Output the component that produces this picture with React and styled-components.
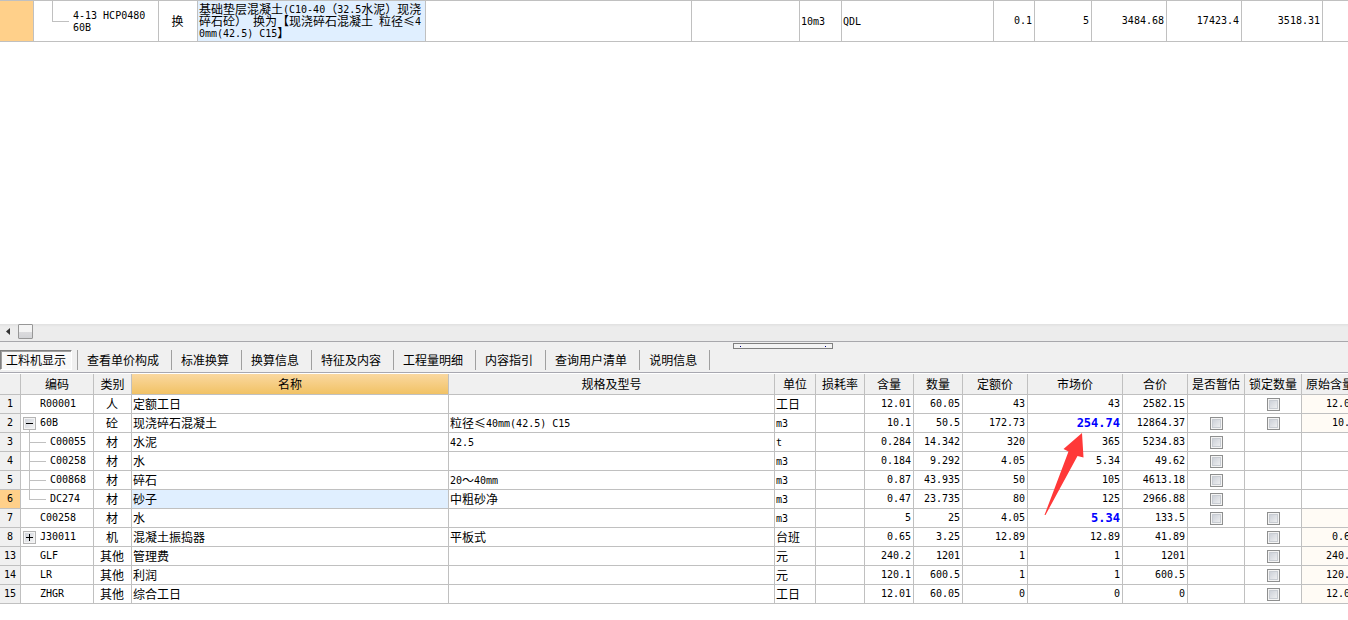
import React, { useState } from "react";
import styled, { createGlobalStyle } from "styled-components";

const tabs = [
  "工料机显示",
  "查看单价构成",
  "标准换算",
  "换算信息",
  "特征及内容",
  "工程量明细",
  "内容指引",
  "查询用户清单",
  "说明信息",
];

const columns = [
  { title: "", width: 21 },
  { title: "编码", width: 73 },
  { title: "类别", width: 38 },
  { title: "名称", width: 317, active: true },
  { title: "规格及型号" },
  { title: "单位", width: 41 },
  { title: "损耗率", width: 49 },
  { title: "含量", width: 49 },
  { title: "数量", width: 49 },
  { title: "定额价", width: 65 },
  { title: "市场价", width: 95 },
  { title: "合价", width: 65 },
  { title: "是否暂估", width: 57 },
  { title: "锁定数量", width: 57 },
  { title: "原始含量", width: 57 },
];

const quotaColumns = [34, 125, 39, 228, 266, 108, 42, 152, 41, 57, 75, 75, 81, null];

const resources = [
  { no: 1, code: "R00001", type: "人", name: "定额工日", spec: "", unit: "工日", content: "12.01", qty: "60.05", base: "43", market: "43", total: "2582.15", lock: true, origin: "12.01" },
  { no: 2, code: "60B", tree: "open", type: "砼", name: "现浇碎石混凝土", spec: "粒径≤40mm(42.5) C15", unit: "m3", content: "10.1", qty: "50.5", base: "172.73", market: "254.74", changed: true, arrow: true, total: "12864.37", estimate: true, lock: true, origin: "10.1" },
  { no: 3, code: "C00055", tree: "child", type: "材", name: "水泥", spec: "42.5", unit: "t", content: "0.284", qty: "14.342", base: "320", market: "365", total: "5234.83", estimate: true },
  { no: 4, code: "C00258", tree: "child", type: "材", name: "水", spec: "", unit: "m3", content: "0.184", qty: "9.292", base: "4.05", market: "5.34", total: "49.62", estimate: true },
  { no: 5, code: "C00868", tree: "child", type: "材", name: "碎石", spec: "20～40mm", unit: "m3", content: "0.87", qty: "43.935", base: "50", market: "105", total: "4613.18", estimate: true },
  { no: 6, code: "DC274", tree: "last", type: "材", name: "砂子", spec: "中粗砂净", unit: "m3", content: "0.47", qty: "23.735", base: "80", market: "125", total: "2966.88", estimate: true },
  { no: 7, code: "C00258", type: "材", name: "水", spec: "", unit: "m3", content: "5", qty: "25", base: "4.05", market: "5.34", changed: true, total: "133.5", estimate: true, lock: true, origin: "" },
  { no: 8, code: "J30011", tree: "closed", type: "机", name: "混凝土振捣器", spec: "平板式", unit: "台班", content: "0.65", qty: "3.25", base: "12.89", market: "12.89", total: "41.89", lock: true, origin: "0.65" },
  { no: 13, code: "GLF", type: "其他", name: "管理费", spec: "", unit: "元", content: "240.2", qty: "1201", base: "1", market: "1", total: "1201", lock: true, origin: "240.2" },
  { no: 14, code: "LR", type: "其他", name: "利润", spec: "", unit: "元", content: "120.1", qty: "600.5", base: "1", market: "1", total: "600.5", lock: true, origin: "120.1" },
  { no: 15, code: "ZHGR", type: "其他", name: "综合工日", spec: "", unit: "工日", content: "12.01", qty: "60.05", base: "0", market: "0", total: "0", lock: true, origin: "12.01" },
];

// Half-width runs use the monospaced face, the rest stays in the CJK face.
function Mixed({ text }) {
  return text
    .split(/([\x20-\x7e]+)/)
    .filter(Boolean)
    .map((part, i) =>
      /^[\x20-\x7e]/.test(part) ? <Mono key={i}>{part}</Mono> : part
    );
}

function TreeGutter({ kind, onToggle }) {
  if (kind === "child" || kind === "last") {
    return (
      <Branch>
        <BranchTop />
        {kind === "child" && <BranchRest />}
      </Branch>
    );
  }
  if (kind === "open" || kind === "closed") {
    return (
      <ExpanderBox>
        <Expander
          type="button"
          aria-label={kind === "open" ? "折叠" : "展开"}
          onClick={onToggle}
        >
          <svg width="9" height="9" viewBox="0 0 9 9" shapeRendering="crispEdges">
            <path d="M1 4h7v1H1z" fill="#000" />
            {kind === "closed" && <path d="M4 1h1v7H4z" fill="#000" />}
          </svg>
        </Expander>
        {kind === "open" && <Stub />}
      </ExpanderBox>
    );
  }
  return null;
}

function QuotaGrid() {
  return (
    <Grid $min={1359}>
      <colgroup>
        {quotaColumns.map((width, i) => (
          <Col key={i} $width={width} />
        ))}
      </colgroup>
      <tbody>
        <QuotaRow>
          <RowNo $selected />
          <Cell $flush>
            <QuotaCode>
              <QuotaBranch />
              <QuotaCodeText>
                4-13 HCP0480
                <br />
                60B
              </QuotaCodeText>
            </QuotaCode>
          </Cell>
          <Cell $align="center">换</Cell>
          <QuotaName>
            <Mixed text="基础垫层混凝土(C10-40（32.5水泥）现浇碎石砼） 换为【现浇碎石混凝土 粒径≤40mm(42.5) C15】" />
          </QuotaName>
          <Cell />
          <Cell />
          <Cell><Mono>10m3</Mono></Cell>
          <Cell><Mono>QDL</Mono></Cell>
          <NumCell>0.1</NumCell>
          <NumCell>5</NumCell>
          <NumCell>3484.68</NumCell>
          <NumCell>17423.4</NumCell>
          <NumCell>3518.31</NumCell>
          <Cell />
        </QuotaRow>
      </tbody>
    </Grid>
  );
}

function ResourceRow({ row, selected, onSelect, onToggle }) {
  return (
    <tr onClick={onSelect}>
      <RowNo $selected={selected}>{row.no}</RowNo>
      <Cell $flush>
        <CodeBox>
          <Gutter>
            <TreeGutter kind={row.tree} onToggle={onToggle} />
          </Gutter>
          <CodeText $child={row.tree === "child" || row.tree === "last"}>
            {row.code}
          </CodeText>
        </CodeBox>
      </Cell>
      <Cell $align="center">{row.type}</Cell>
      <Cell $selected={selected}>{row.name}</Cell>
      <Cell><Mixed text={row.spec} /></Cell>
      <Cell><Mixed text={row.unit} /></Cell>
      <Cell />
      <NumCell>{row.content}</NumCell>
      <NumCell>{row.qty}</NumCell>
      <NumCell>{row.base}</NumCell>
      <MarketCell $changed={row.changed}>
        {row.market}
        {row.arrow && (
          <Arrow width="40" height="84" viewBox="0 0 40 84" aria-hidden="true">
            <path d="M38 0L19.5 16L24.5 18.5L0.5 82L1.5 82L33.5 23L39.5 24.5Z" fill="#ff3838" />
          </Arrow>
        )}
      </MarketCell>
      <NumCell>{row.total}</NumCell>
      <Cell $flush $align="center">
        {row.estimate && <Check type="checkbox" aria-label={`${row.name} 是否暂估`} />}
      </Cell>
      <Cell $flush $align="center">
        {row.lock && <Check type="checkbox" aria-label={`${row.name} 锁定数量`} />}
      </Cell>
      <NumCell $tint={row.lock}>{row.origin}</NumCell>
    </tr>
  );
}

export default function App() {
  const [activeTab, setActiveTab] = useState(tabs[0]);
  const [selectedNo, setSelectedNo] = useState(6);
  const [expanded, setExpanded] = useState(true);

  const rows = resources
    .filter((r) => expanded || (r.tree !== "child" && r.tree !== "last"))
    .map((r) => (r.no === 2 && !expanded ? { ...r, tree: "closed" } : r));

  const handleToggle = (no) => {
    if (no === 2) setExpanded(!expanded);
  };

  return (
    <Page>
      <GlobalStyle />
      <QuotaPane>
        <QuotaGrid />
      </QuotaPane>
      <ScrollBar>
        <ScrollButton type="button" aria-label="向左滚动">
          <svg width="4" height="7" viewBox="0 0 4 7">
            <path d="M4 0v7L0 3.5z" fill="#333" />
          </svg>
        </ScrollButton>
        <ScrollThumb />
      </ScrollBar>
      <Splitter>
        <SplitterHandle>
          <HandleDot />
          <HandleDot />
        </SplitterHandle>
      </Splitter>
      <TabBar>
        {tabs.map((tab) => (
          <TabItem key={tab}>
            <Tab
              type="button"
              $active={tab === activeTab}
              onClick={() => setActiveTab(tab)}
            >
              {tab}
            </Tab>
          </TabItem>
        ))}
      </TabBar>
      <ResourcePane>
        <Grid $min={1359}>
          <colgroup>
            {columns.map((col, i) => (
              <Col key={i} $width={col.width} />
            ))}
          </colgroup>
          <thead>
            <tr>
              {columns.map((col, i) => (
                <HeadCell key={i} $active={col.active}>{col.title}</HeadCell>
              ))}
            </tr>
          </thead>
          <tbody>
            {rows.map((row) => (
              <ResourceRow
                key={row.no}
                row={row}
                selected={row.no === selectedNo}
                onSelect={() => setSelectedNo(row.no)}
                onToggle={() => handleToggle(row.no)}
              />
            ))}
          </tbody>
        </Grid>
      </ResourcePane>
    </Page>
  );
}

const GlobalStyle = createGlobalStyle`
  * {
    box-sizing: border-box;
  }
  body {
    margin: 0;
    background: #fff;
    color: #000;
    font-family: "Noto Sans CJK SC", sans-serif;
    font-size: 12px;
    text-spacing-trim: space-all;
  }
  button {
    font: inherit;
    color: inherit;
  }
`;

const Page = styled.div`
  display: flex;
  flex-direction: column;
  min-height: 100vh;
  overflow: hidden;
`;

const QuotaPane = styled.section`
  flex: 1;
  border-top: 1px solid #c0c0c0;
  overflow: hidden;
`;

const ResourcePane = styled.section`
  overflow: hidden;
  padding-bottom: 16px;
  border-top: 1px solid #fff;
`;

const Grid = styled.table`
  table-layout: fixed;
  border-collapse: separate;
  border-spacing: 0;
  width: 100%;
  min-width: ${(p) => p.$min}px;
`;

const Col = styled.col`
  width: ${(p) => (p.$width ? `${p.$width}px` : "auto")};
`;

const Cell = styled.td`
  padding: ${(p) => (p.$flush ? "0" : "0 2px 0 1px")};
  height: 19px;
  line-height: 18px;
  border-right: 1px solid #c0c0c0;
  border-bottom: 1px solid #c0c0c0;
  background: ${(p) => (p.$selected ? "#e0efff" : "#fff")};
  text-align: ${(p) => p.$align || "left"};
  vertical-align: middle;
  white-space: nowrap;
`;

const NumCell = styled(Cell)`
  background: ${(p) => (p.$tint ? "#fffbf5" : "#fff")};
  font-family: "DejaVu Sans Mono", monospace;
  font-size: 10px;
  text-align: right;
`;

const MarketCell = styled(NumCell)`
  position: relative;
  color: ${(p) => (p.$changed ? "#0000ff" : "#000")};
  font-size: ${(p) => (p.$changed ? "12px" : "10px")};
  font-weight: ${(p) => (p.$changed ? "bold" : "normal")};
`;

const Arrow = styled.svg`
  position: absolute;
  z-index: 1;
  top: 19px;
  right: 38px;
  pointer-events: none;
`;

const RowNo = styled(Cell)`
  padding: 0;
  background: ${(p) => (p.$selected ? "#ffd08a" : "#f0f0f0")};
  font-family: "DejaVu Sans Mono", monospace;
  font-size: 10px;
  text-align: center;
`;

const HeadCell = styled.th`
  height: 21px;
  padding: 0;
  border-right: 1px solid #c0c0c0;
  border-bottom: 1px solid #c0c0c0;
  background: ${(p) =>
    p.$active ? "linear-gradient(#fad8a0, #f1c265)" : "#f0f0f0"};
  font-weight: normal;
  line-height: 20px;
  white-space: nowrap;
`;

const Mono = styled.span`
  font-family: "DejaVu Sans Mono", monospace;
  font-size: 10px;
  line-height: 8px;
  vertical-align: 1px;
`;

const QuotaRow = styled.tr`
  td {
    height: 41px;
  }
`;

const QuotaCode = styled.div`
  display: flex;
  height: 40px;
`;

const QuotaBranch = styled.span`
  width: 17px;
  height: 21px;
  margin-left: 18px;
  border-left: 1px solid #c0c0c0;
  border-bottom: 1px solid #c0c0c0;
`;

const QuotaCodeText = styled.span`
  align-self: center;
  padding: 2px 0 0 4px;
  font-family: "DejaVu Sans Mono", monospace;
  font-size: 10px;
  line-height: 12px;
`;

const QuotaName = styled(Cell)`
  background: #e0efff;
  line-height: 12px;
  white-space: normal;
  word-break: break-all;
`;

const CodeBox = styled.div`
  display: flex;
  align-items: center;
  height: 18px;
`;

const Gutter = styled.span`
  display: flex;
  width: 19px;
  height: 18px;
`;

const CodeText = styled.span`
  padding-left: ${(p) => (p.$child ? "10px" : "0")};
  font-family: "DejaVu Sans Mono", monospace;
  font-size: 10px;
`;

const Branch = styled.span`
  display: flex;
  flex: none;
  flex-direction: column;
  width: 17px;
  margin-left: 8px;
`;

const BranchTop = styled.span`
  height: 10px;
  border-left: 1px solid #c0c0c0;
  border-bottom: 1px solid #c0c0c0;
`;

const BranchRest = styled.span`
  flex: 1;
  border-left: 1px solid #c0c0c0;
`;

const ExpanderBox = styled.span`
  display: flex;
  flex-direction: column;
  align-items: center;
  padding: 3px 0 0 2px;
`;

const Expander = styled.button`
  display: flex;
  flex: none;
  align-items: center;
  justify-content: center;
  width: 13px;
  height: 13px;
  padding: 0;
  border: 1px solid #b4b4b4;
  background: linear-gradient(135deg, #ccd0d8, #f6f6f6);
  box-shadow: inset 0 0 0 1px #f4f4f4;
`;

const Stub = styled.span`
  flex: 1;
  width: 1px;
  background: #c0c0c0;
`;

const Check = styled.input`
  appearance: none;
  display: block;
  width: 13px;
  height: 13px;
  margin: 0 auto;
  border: 1px solid #8e8f8f;
  background: linear-gradient(135deg, #c4c9d2, #f6f6f6);
  box-shadow: inset 0 0 0 1px #f4f4f4, inset 0 0 0 2px #c8ccd2;
  &:checked {
    background: #4a6f9c;
  }
`;

const ScrollBar = styled.div`
  display: flex;
  align-items: flex-start;
  height: 17px;
  background: linear-gradient(#e0e0e0, #ececec 3px, #ececec);
`;

const ScrollButton = styled.button`
  display: flex;
  align-items: center;
  justify-content: center;
  width: 18px;
  height: 15px;
  padding: 0 2px 0 0;
  border: none;
  background: transparent;
`;

const ScrollThumb = styled.div`
  width: 15px;
  height: 15px;
  border: 1px solid #979797;
  border-radius: 1px;
  background: linear-gradient(#f4f4f4 50%, #dcdcde 50%, #d2d3d6);
`;

const Splitter = styled.div`
  display: flex;
  height: 9px;
  padding-top: 1px;
  border-top: 1px solid #a8a8ac;
  background: #f0f0f0;
`;

const SplitterHandle = styled.div`
  display: flex;
  align-items: center;
  justify-content: space-between;
  width: 100px;
  height: 6px;
  margin-left: 733px;
  padding: 0 6px;
  border: 1px solid #808080;
  background: #f4f4f4;
`;

const HandleDot = styled.span`
  width: 1px;
  height: 1px;
  background: #000080;
`;

const TabBar = styled.nav`
  display: flex;
  height: 23px;
  padding-bottom: 2px;
  border-bottom: 1px solid #a8a8b0;
  background: #f0f0f0;
`;

const TabItem = styled.span`
  display: flex;
  height: 20px;
  padding: 0 6px 0 3px;
  border-right: 1px solid #a0a0a0;
  &:first-child {
    padding: 0 5px 0 0;
  }
`;

const Tab = styled.button`
  padding: 0 5px;
  border: 1px solid transparent;
  background: transparent;
  line-height: 18px;
  white-space: nowrap;
  ${(p) =>
    p.$active &&
    `
    border-color: #808080 #fff #fff #808080;
    background: #f8f8f8;
    box-shadow: inset 1px 1px 0 #a0a0a0;
  `}
`;
